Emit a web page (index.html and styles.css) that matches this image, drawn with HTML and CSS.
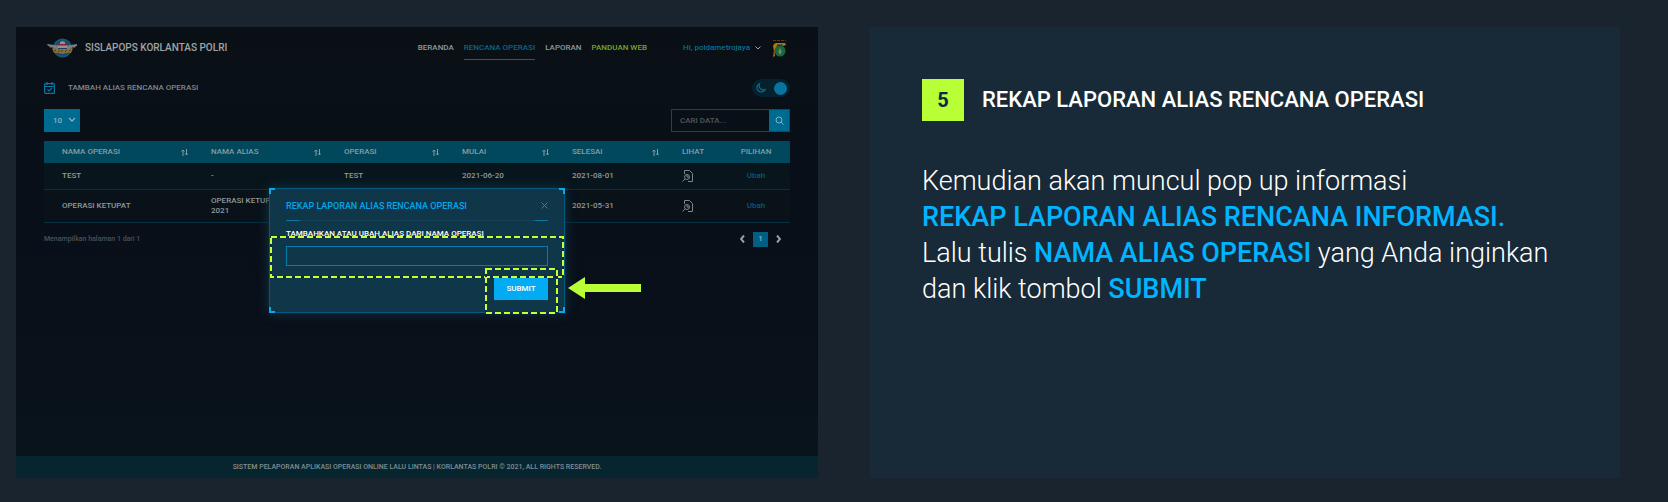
FILE: index.html
```html
<!DOCTYPE html>
<html lang="id">
<head>
<meta charset="utf-8">
<title>Sislapops Korlantas Polri</title>
<link rel="stylesheet" href="styles.css">
</head>
<body>
<main class="page">
  <section class="app">
    <header class="topbar">
      <svg class="logo" viewBox="0 0 30 20" aria-hidden="true">
        <circle cx="15.500" cy="10" r="9.500" fill="#155a78"/>
        <circle cx="15.500" cy="10" r="7.500" fill="#233c70"/>
        <path d="M10 6Q15.500 1 21 6V9H10Z" fill="#8b2430"/>
        <path d="M13 4L15.500 3 18 4V6H13Z" fill="#8e9295"/>
        <path d="M0 6L11 7.500V11H7L6 9.500H3L2 8H1ZM30 6L20 7.500V11H24L25 9.500H28L29 8H30Z" fill="#777d80"/>
        <path d="M11 7.500H20V10H11Z" fill="#8e9295"/>
        <path d="M5 10.500L8 10 10 11H21L23 10 26 10.500 24 15 22 14.500 15.500 16 9 14.500 7 15Z" fill="#877231"/>
        <path d="M7 13L9 12M11 13.500L13 12.500M15 14V12M18 14L20 12M22 13L24 12" stroke="#292b2b" stroke-width=".8"/>
      </svg>
      <h1 class="brand">SISLAPOPS KORLANTAS POLRI</h1>
      <nav class="nav">
        <a href="#">BERANDA</a>
        <a href="#" class="active">RENCANA OPERASI</a>
        <a href="#">LAPORAN</a>
        <a href="#" class="guide">PANDUAN WEB</a>
      </nav>
      <button class="user" type="button">Hi, poldametrojaya
        <svg width="6" height="4" viewBox="0 0 6 4" aria-hidden="true"><path d="M.5.500L3 3 5.500.500" fill="none" stroke="#a1a5a8"/></svg>
      </button>
      <svg class="emblem" viewBox="0 0 15 19" aria-hidden="true">
        <path d="M1 1.500H14" stroke="#5b3e15" stroke-dasharray="3 1"/>
        <path d="M2 5L4 4H13L14 6 11 7 5 7 3 11 3 17 1 18 2 12 1 7Z" fill="#a87812"/>
        <path d="M5 5.500H11L10 7H5Z" fill="#302a18"/>
        <circle cx="8" cy="12" r="5.500" fill="#17693b"/>
        <path d="M8 9L9 11 10 13 9 13V15H7V13L6 13 7 11Z" fill="#6b8b68"/>
        <path d="M2 12V16" stroke="#7f1e1c"/>
      </svg>
    </header>

    <div class="heading">
      <svg width="11" height="12" viewBox="0 0 11 12" fill="none" stroke="#0779a3" stroke-width="1.200" aria-hidden="true"><rect x=".6" y="1.600" width="9.800" height="9.800" rx="1"/><path d="M.5 4.500H10.500M3 0V3M8 0V3M3.500 7.500L5 9 8 6"/></svg>
      <h2>TAMBAH ALIAS RENCANA OPERASI</h2>
      <label class="toggle">
        <input type="checkbox" checked aria-label="Mode gelap">
        <svg width="10" height="10" viewBox="0 0 10 10" aria-hidden="true"><path d="M3.500.800A4.300 4.300 0 1 0 9.200 6.500 4.300 4.300 0 0 1 3.500.800Z" fill="none" stroke="#086f94" stroke-width="1.200"/></svg>
        <span class="knob"></span>
      </label>
    </div>

    <div class="tools">
      <span class="size">
        <select aria-label="Jumlah baris"><option>10</option></select>
        <svg width="8" height="5" viewBox="0 0 8 5" aria-hidden="true"><path d="M1 1L4 4 7 1" fill="none" stroke="#8ab0bd" stroke-width="1.300"/></svg>
      </span>
      <form class="search">
        <input type="text" placeholder="CARI DATA..." aria-label="Cari data">
        <button type="button" aria-label="Cari"><svg width="9" height="9" viewBox="0 0 9 9" fill="none" stroke="#8ab0bd" aria-hidden="true"><circle cx="4" cy="4" r="3"/><path d="M6 6L8.500 8.500"/></svg></button>
      </form>
    </div>

    <table class="data">
      <colgroup><col class="c-name"><col class="c-alias"><col class="c-op"><col class="c-date"><col class="c-date"><col class="c-view"><col class="c-pick"></colgroup>
      <thead>
        <tr>
          <th><span>NAMA OPERASI <svg class="sort" viewBox="0 0 7 7"><path d="M2 7V1M.5 2.500L2 1 3.500 2.500M5.500 0V6M4 4.500L5.500 6 7 4.500"/></svg></span></th>
          <th><span>NAMA ALIAS <svg class="sort" viewBox="0 0 7 7"><path d="M2 7V1M.5 2.500L2 1 3.500 2.500M5.500 0V6M4 4.500L5.500 6 7 4.500"/></svg></span></th>
          <th><span>OPERASI <svg class="sort" viewBox="0 0 7 7"><path d="M2 7V1M.5 2.500L2 1 3.500 2.500M5.500 0V6M4 4.500L5.500 6 7 4.500"/></svg></span></th>
          <th><span>MULAI <svg class="sort" viewBox="0 0 7 7"><path d="M2 7V1M.5 2.500L2 1 3.500 2.500M5.500 0V6M4 4.500L5.500 6 7 4.500"/></svg></span></th>
          <th><span>SELESAI <svg class="sort" viewBox="0 0 7 7"><path d="M2 7V1M.5 2.500L2 1 3.500 2.500M5.500 0V6M4 4.500L5.500 6 7 4.500"/></svg></span></th>
          <th>LIHAT</th>
          <th class="pick">PILIHAN</th>
        </tr>
      </thead>
      <tbody>
        <tr>
          <td>TEST</td><td>-</td><td>TEST</td><td>2021-06-20</td><td>2021-08-01</td>
          <td><svg class="doc" viewBox="0 0 11 12"><path d="M2.500 4V.500H7.500L10.500 3.500V11.500H6M.5 11.500L3 9"/><circle cx="5" cy="7" r="2.500"/><path d="M5 5V7H7"/></svg></td>
          <td class="pick"><a href="#">Ubah</a></td>
        </tr>
        <tr class="tall">
          <td>OPERASI KETUPAT</td><td>OPERASI KETUP<br>2021</td><td></td><td></td><td>2021-05-31</td>
          <td><svg class="doc" viewBox="0 0 11 12"><path d="M2.500 4V.500H7.500L10.500 3.500V11.500H6M.5 11.500L3 9"/><circle cx="5" cy="7" r="2.500"/><path d="M5 5V7H7"/></svg></td>
          <td class="pick"><a href="#">Ubah</a></td>
        </tr>
      </tbody>
    </table>

    <div class="pager">
      <span>Menampilkan halaman 1 dari 1</span>
      <div class="pages">
        <button type="button" aria-label="Sebelumnya"><svg width="5" height="8" viewBox="0 0 5 8"><path d="M4 .500L1 4 4 7.500"/></svg></button>
        <button type="button" class="current">1</button>
        <button type="button" aria-label="Berikutnya"><svg width="5" height="8" viewBox="0 0 5 8"><path d="M1 .500L4 4 1 7.500"/></svg></button>
      </div>
    </div>

    <footer class="foot">SISTEM PELAPORAN APLIKASI OPERASI ONLINE LALU LINTAS | KORLANTAS POLRI © 2021, ALL RIGHTS RESERVED.</footer>

    <div class="modal" role="dialog" aria-labelledby="modal-title">
      <i class="corner tl"></i><i class="corner tr"></i><i class="corner bl"></i><i class="corner br"></i>
      <div class="modal-head">
        <h3 id="modal-title">REKAP LAPORAN ALIAS RENCANA OPERASI</h3>
        <button type="button" aria-label="Tutup"><svg width="7" height="7" viewBox="0 0 7 7"><path d="M.5.500L6.500 6.500M6.500.500L.5 6.500" stroke="#0c8fc7"/></svg></button>
      </div>
      <label for="alias">TAMBAHKAN ATAU UBAH ALIAS DARI NAMA OPERASI</label>
      <input id="alias" type="text">
      <button type="button" class="submit">SUBMIT</button>
      <svg class="mark mark-field" aria-hidden="true"><rect class="under" x="1" y="1" width="292" height="40"/><rect x="1" y="1" width="292" height="40"/></svg>
      <svg class="mark mark-submit" aria-hidden="true"><rect class="under" x="1" y="1" width="71" height="44"/><rect x="1" y="1" width="71" height="44"/></svg>
      <svg class="arrow" viewBox="0 0 73 22" aria-hidden="true"><path d="M0 11L17 0V7H73V15H17V22Z" fill="#b8ff35"/></svg>
    </div>
  </section>

  <section class="guide-panel">
    <div class="step">
      <span class="number">5</span>
      <h2>REKAP LAPORAN ALIAS RENCANA OPERASI</h2>
    </div>
    <p class="text">Kemudian akan muncul pop up informasi<br>
      <strong>REKAP LAPORAN ALIAS RENCANA INFORMASI.</strong><br>
      Lalu tulis <strong>NAMA ALIAS OPERASI</strong> yang Anda inginkan<br>
      dan klik tombol <strong>SUBMIT</strong></p>
  </section>
</main>
</body>
</html>
```
FILE: styles.css
```css
* { box-sizing: border-box; }
body { margin: 0; background: #19242e; font-family: Roboto, "Liberation Sans", sans-serif; }
h1, h2, h3, p { margin: 0; font-weight: 500; }
a { text-decoration: none; color: inherit; }
button, input, select { font: inherit; color: inherit; margin: 0; padding: 0; border: 0; border-radius: 0; background: none; }
svg { display: block; flex: none; }

.page {
  display: grid;
  grid-template-columns: 802fr 750fr;
  gap: 52px;
  min-height: 100vh;
  padding: 27px 48px 24px 16px;
}

.app {
  position: relative;
  display: flex;
  flex-direction: column;
  padding: 0 28px;
  background: linear-gradient(180deg, #091015, #090f19 35%, #0a101a 65%, #08141b);
  color: #92989b;
  font-size: 8px;
  font-weight: 500;
  line-height: 10px;
}

.topbar { display: flex; align-items: center; height: 42px; }
.logo { width: 30px; height: 20px; margin: 0 8px 0 3px; }
.brand { font-size: 10px; line-height: 12px; color: #a0a4a7; white-space: nowrap; }
.nav { display: flex; gap: 10px; margin-left: auto; white-space: nowrap; }
.nav a { padding: 7px 0 6px; border-bottom: 1px solid transparent; }
.nav .active { color: #07658b; border-color: #07658b; }
.nav .guide { color: #7aa42b; }
.user { display: flex; align-items: center; gap: 5px; margin-left: 36px; color: #086f94; white-space: nowrap; }
.emblem { width: 15px; height: 19px; margin: 0 3px 0 11px; }

.heading { display: flex; align-items: center; height: 20px; margin-top: 9px; }
.heading h2 { margin-left: 13px; color: #81878b; font-size: 8px; }
.toggle { display: flex; align-items: center; justify-content: space-between; width: 38px; height: 18px; margin-left: auto; padding: 0 3px 0 4px; border-radius: 9px; background: #06202d; }
.toggle input { position: absolute; opacity: 0; }
.knob { width: 13px; height: 13px; border-radius: 50%; background: #08739c; }

.tools { display: flex; justify-content: space-between; height: 23px; margin-top: 11px; }
.size { position: relative; display: flex; width: 36px; background: #006b91; color: #8ab0bd; }
.size select { width: 100%; padding-left: 9px; appearance: none; }
.size svg { position: absolute; right: 4px; top: 8px; pointer-events: none; }
.search { display: flex; width: 119px; border: 1px solid #064d67; }
.search input { flex: 1; min-width: 0; padding-left: 8px; }
.search input::placeholder { color: #50575d; opacity: 1; }
.search button { display: grid; place-items: center; width: 20px; background: #006b91; }

.data { width: 100%; margin-top: 9px; border-collapse: collapse; table-layout: fixed; text-align: left; }
.data th, .data td { padding: 0 5px 0 18px; font-weight: 500; }
.data th { height: 22px; background: #02485d; color: #849da5; }
.data th span { display: flex; align-items: center; justify-content: space-between; }
.data td { height: 26px; border-bottom: 1px solid #06303f; background: #08151d; }
.data .tall td { height: 33px; background: #091119; }
.data .pick { padding: 0; text-align: center; }
.data .pick a { color: #075a79; }
.c-name { width: 149px; }
.c-alias { width: 133px; }
.c-op { width: 118px; }
.c-date { width: 110px; }
.c-view { width: 58px; }
.sort { width: 7px; height: 7px; fill: none; stroke: #849da5; stroke-width: 1; }
.doc { width: 11px; height: 12px; fill: none; stroke: #7e8487; stroke-width: 1; }

.pager { display: flex; align-items: center; justify-content: space-between; margin-top: 9px; color: #4a5157; }
.pager > span { font-size: 7px; }
.pages { display: flex; align-items: center; gap: 8px; padding-right: 9px; }
.pages svg { fill: none; stroke: #999fa2; stroke-width: 2; }
.pages .current { width: 15px; height: 15px; background: #005f82; color: #8ab0bd; }

.foot { margin: auto -28px 0; height: 22px; line-height: 22px; text-align: center; background: #06252e; color: #838d91; font-size: 7px; }

.modal {
  position: absolute;
  top: 161px;
  left: 50%;
  display: flex;
  flex-direction: column;
  width: 296px;
  height: 125px;
  margin-left: -148px;
  padding: 12px 16px;
  background: #10364a;
  border: 1px solid #075a7d;
  border-radius: 3px;
  box-shadow: 0 0 12px #10384a;
}
.corner { position: absolute; width: 6px; height: 6px; border: 0 solid #05aaf0; }
.tl { top: -1px; left: -1px; border-width: 2px 0 0 2px; }
.tr { top: -1px; right: -1px; border-width: 2px 2px 0 0; }
.bl { bottom: -1px; left: -1px; border-width: 0 0 2px 2px; }
.br { bottom: -1px; right: -1px; border-width: 0 2px 2px 0; }
.modal-head {
  display: flex;
  align-items: center;
  justify-content: space-between;
  height: 20px;
  padding-bottom: 10px;
  border-bottom: 1px solid #15506a;
  border-image: linear-gradient(90deg, #0c75a0 5%, #174255 6%, #174255 94%, #0c75a0 95%) 1;
}
.modal-head h3 { color: #04a5ea; font-size: 9px; white-space: nowrap; }
.modal label { margin-top: 8px; color: #fff; white-space: nowrap; }
.modal input { height: 22px; margin-top: 7px; border: 1px solid #087bad; }
.submit { align-self: flex-end; width: 54px; height: 22px; margin-top: 12px; background: #03abf3; color: #fff; flex: none; }
.mark { position: absolute; overflow: visible; pointer-events: none; }
.mark rect { fill: none; stroke: #c9ff35; stroke-width: 2; stroke-dasharray: 6 3; }
.mark .under { stroke: #102944; stroke-dasharray: none; }
.mark-field { top: 47px; left: 0; width: 294px; height: 42px; }
.mark-submit { top: 79px; left: 215px; width: 73px; height: 46px; }
.arrow { position: absolute; left: 298px; top: 88px; width: 73px; height: 22px; }

.guide-panel { padding: 52px; background: #182a37; color: #fff; }
.step { display: flex; align-items: center; gap: 18px; }
.number { display: grid; place-items: center; width: 42px; height: 42px; background: #b8ff35; color: #0d2949; font-size: 20px; font-weight: 700; }
.step h2 { font-size: 22px; line-height: 24px; white-space: nowrap; }
.text { margin-top: 42px; font-size: 27px; line-height: 36px; font-weight: 300; white-space: nowrap; }
.text strong { color: #00b4ff; font-weight: 500; }
```
